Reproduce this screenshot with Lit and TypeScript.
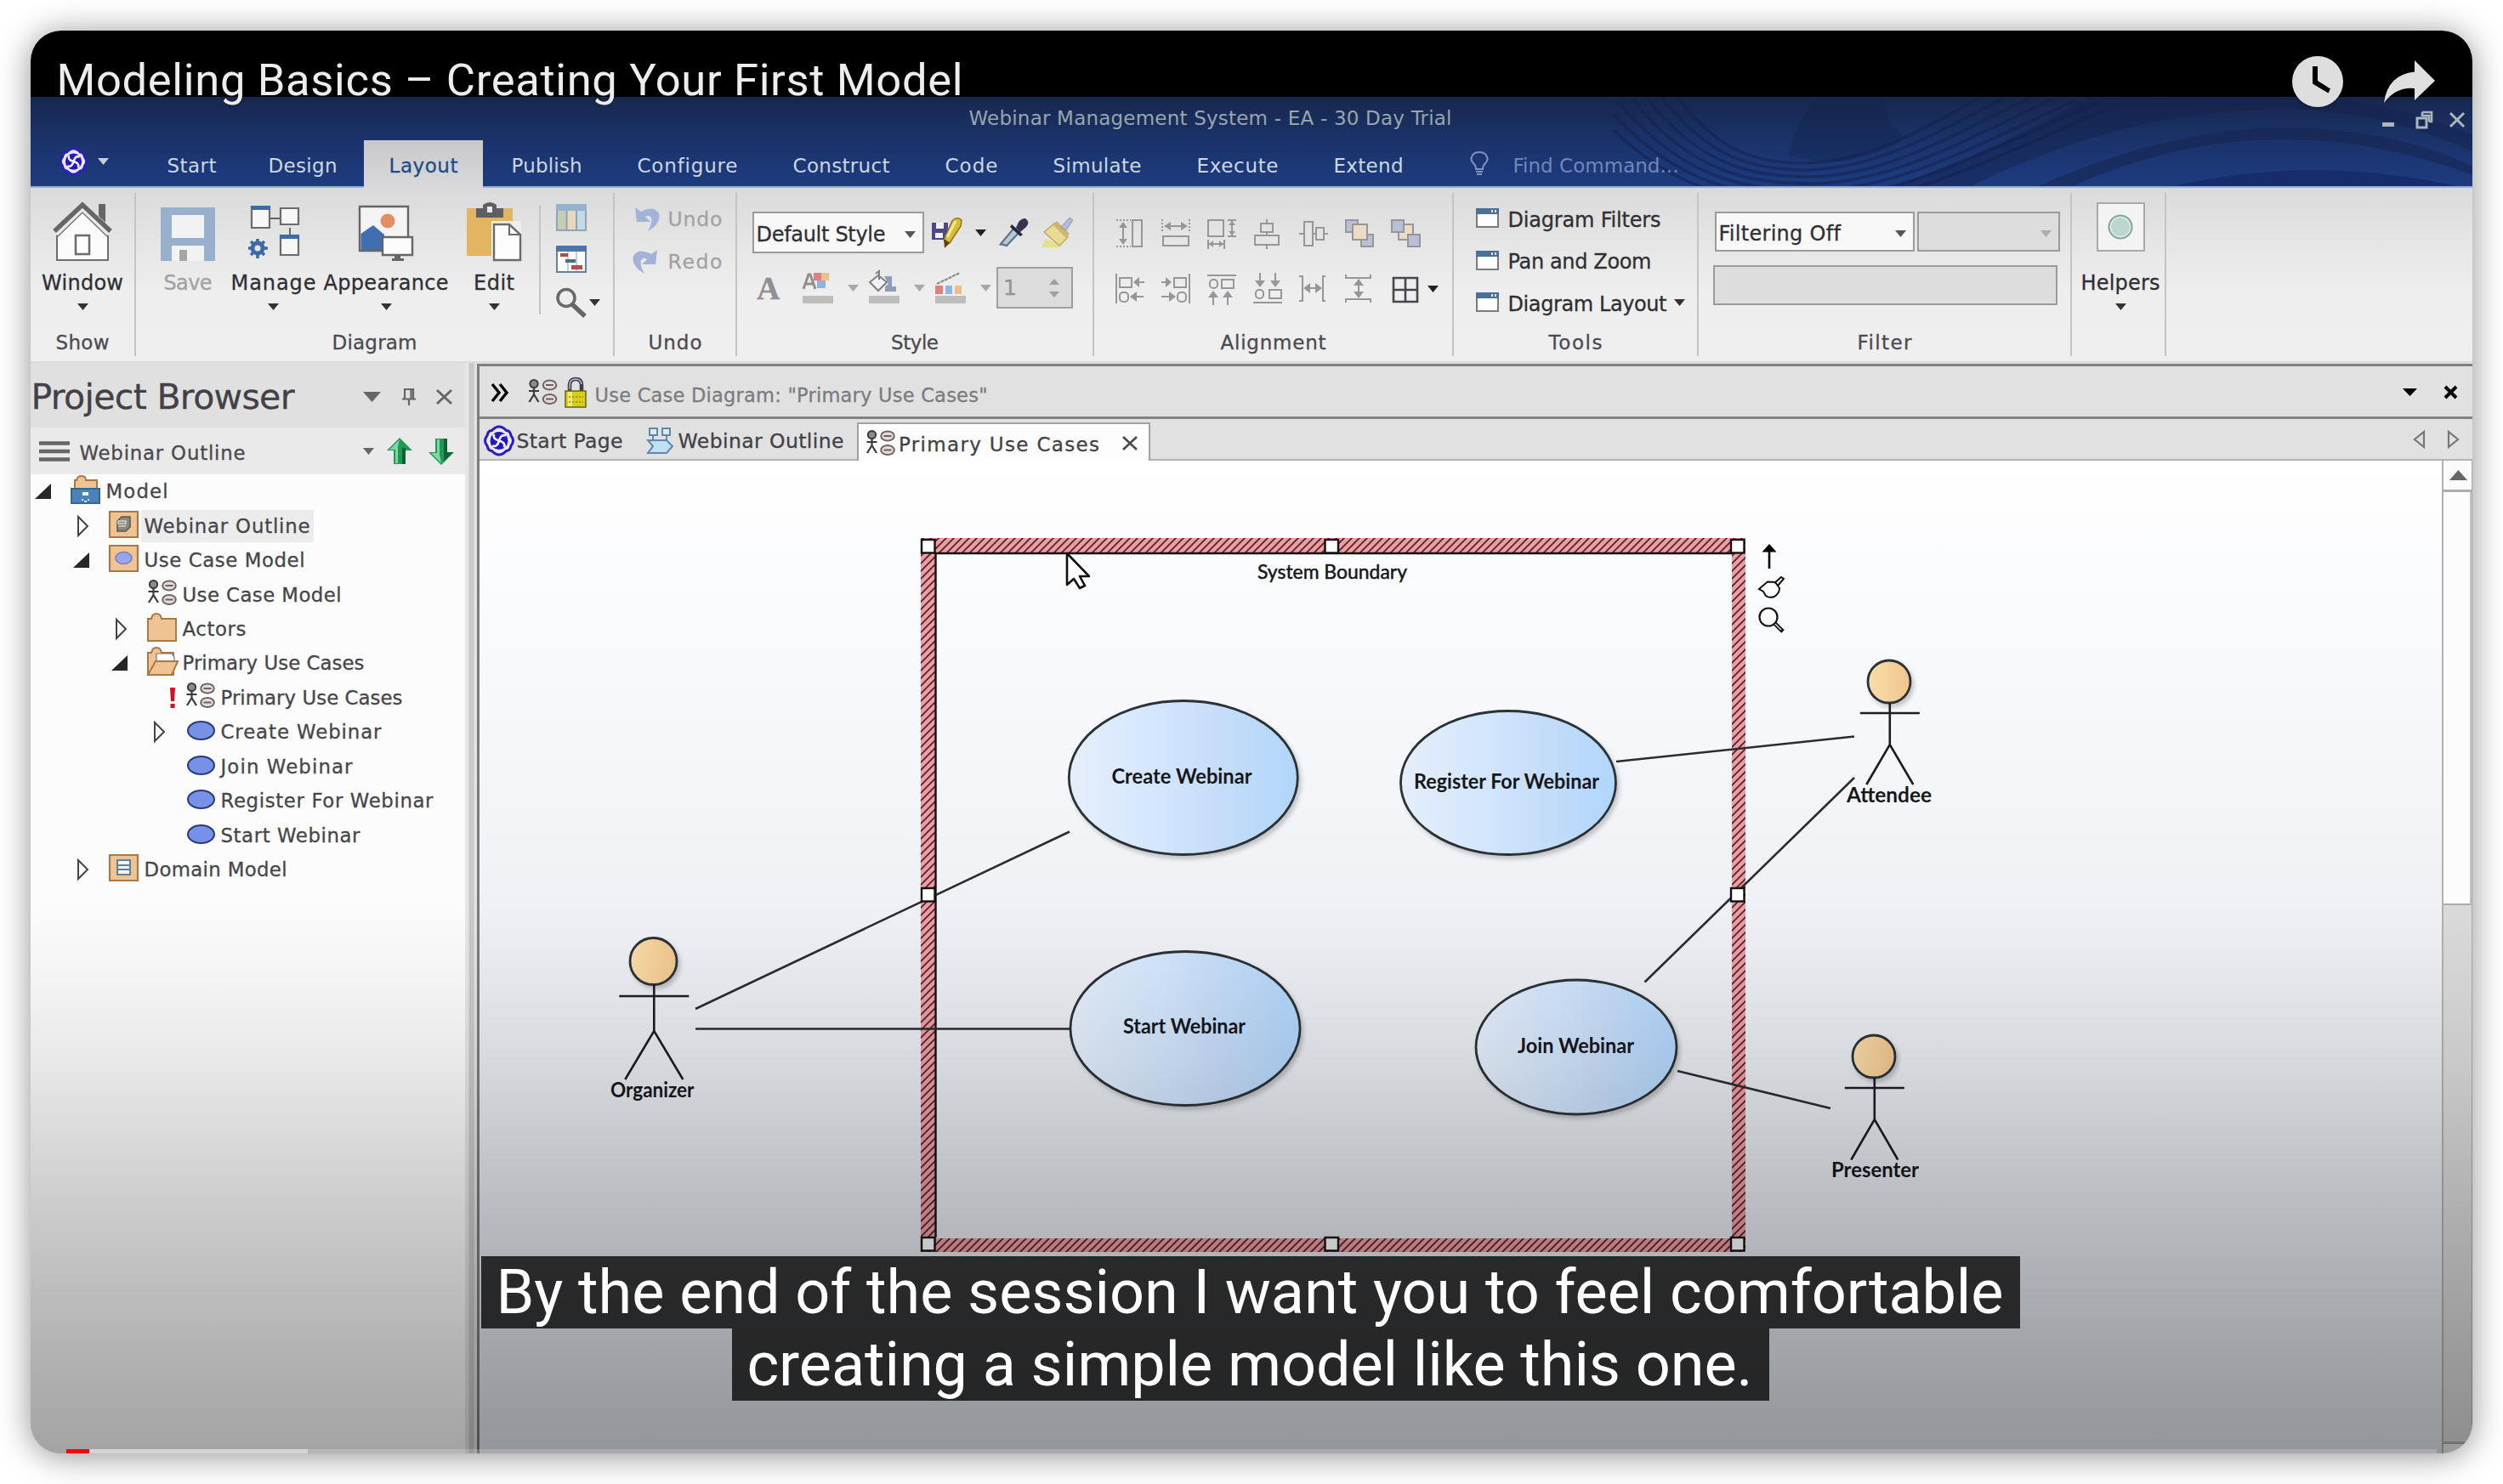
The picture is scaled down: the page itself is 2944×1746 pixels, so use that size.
import { LitElement, html, svg, css, TemplateResult } from "lit";

/** Single line of text whose tracking is adjusted so that it fills a given width. */
class FitText extends LitElement {
  static properties = { w: { type: Number }, label: { type: String } };
  declare w: number;
  declare label: string;
  static styles = css`
    :host { display: inline-block; flex: none; white-space: pre; text-indent: -1.5px; }
  `;
  updated() {
    const span = this.renderRoot.querySelector("span") as HTMLElement;
    span.style.letterSpacing = "0px";
    const natural = span.getBoundingClientRect().width;
    const gaps = Math.max(1, this.label.length - 1);
    span.style.letterSpacing = `${(this.w + 3 - natural) / gaps}px`;
    this.style.width = `${this.w}px`;
  }
  render() {
    return html`<span>${this.label}</span>`;
  }
}
customElements.define("fit-text", FitText);

const t = (label: string, w: number, cls = "") => html`<fit-text class=${cls} label=${label} w=${w}></fit-text>`;

const icon = (w: number, h: number, body: unknown, cls = "") =>
  html`<svg class="ic ${cls}" width=${w} height=${h} viewBox="0 0 ${w} ${h}" fill="none">${body}</svg>`;

const caret = (color = "#333", cls = "") => icon(13, 8, svg`<path d="M0 0H13L6.5 8Z" fill=${color}/>`, cls);

const logo = (w: number, h: number) => html`<svg class="ic" width=${w} height=${h} viewBox="0 0 36 36" fill="none">
  <path d="M9.500 6Q18 -3 26.500 6Q31 6 32 12Q37 18 32 24Q31 30 26.500 30Q18 39 9.500 30Q5 30 4 24Q-1 18 4 12Q5 6 9.500 6Z" fill="#ebe9ff" stroke="#2a1fbe" stroke-width="3"/>
  <circle cx="18" cy="18" r="10.500" fill="#2418c0"/>
  <path d="M18 18Q20 10 26 12M18 18Q16 26 10 24M18 18Q10 16 12 10M18 18Q26 20 24 26" stroke="#f4f2ff" stroke-width="2.800"/>
</svg>`;

const useCaseIcon = (w = 34, h = 31) => html`<svg class="ic" width=${w} height=${h} viewBox="0 0 34 31" fill="none">
  <circle cx="7" cy="5.500" r="4.600" fill="#8c8c8c" stroke="#3a3a3a" stroke-width="2"/>
  <path d="M7 10V19M1 14H13M7 18L1.500 27M7 18L12.500 27" stroke="#3a3a3a" stroke-width="2.200"/>
  <ellipse cx="25.500" cy="7" rx="7.800" ry="5.600" fill="#e6dada" stroke="#6b6262" stroke-width="2"/>
  <ellipse cx="25.500" cy="23.500" rx="7.800" ry="5.600" fill="#e6dada" stroke="#6b6262" stroke-width="2"/>
  <path d="M21 7H30M21 23.500H30" stroke="#6b6262" stroke-width="1.800"/>
</svg>`;

const house = icon(70, 70, svg`
  <path d="M54 2H62V30L54 22Z" fill="#666"/>
  <path d="M5 33L35 8L65 33V68H5Z" fill="#fbfbfb" stroke="#6e6e6e" stroke-width="2"/>
  <path d="M2 36L35 4L68 36" stroke="#e8e8e8" stroke-width="9"/>
  <path d="M2 34L35 3L68 34" stroke="#666" stroke-width="5.500"/>
  <path d="M5 41L35 12L65 41" stroke="#777" stroke-width="1.500"/>
  <rect x="27" y="39" width="16" height="22" stroke="#6e6e6e" stroke-width="2.600" fill="#fff"/>`);

const save = icon(64, 70, svg`
  <path d="M0 6H64V69H0Z" fill="#98b0cd"/><path d="M13 15H51V42H13Z" fill="#f2f2f3"/><path d="M13 51H51V69H13Z" fill="#f2f2f3"/>
  <rect x="22" y="56" width="9" height="13" fill="#a0a8a8"/>`);

const manage = icon(62, 70, svg`
  <path d="M26 19H38M50 30V42" stroke="#666" stroke-width="2"/>
  <g fill="#f7f7f7" stroke="#6b6b6b" stroke-width="2.200"><path d="M5 5H26V30H5Z"/><path d="M39 7H60V26H39Z"/><path d="M39 39H60V62H39Z"/></g>
  <path d="M4 4H27V9H4ZM38 38H61V43H38Z" fill="#3f6ba5"/>
  <circle cx="12" cy="54" r="6" stroke="#3f6ba5" stroke-width="5"/>
  <path d="M12 43V48M12 60V66M1 54H6M18 54H24M4 46L8 50M16 58L20 62M4 62L8 58M16 50L20 46" stroke="#3f6ba5" stroke-width="3.600"/>`);

const appearance = icon(64, 70, svg`
  <path d="M1 5H58V57H1Z" fill="#f4f4f4" stroke="#666" stroke-width="2.400"/>
  <circle cx="34" cy="22" r="8.500" fill="#e58d63"/>
  <path d="M2.500 56V37L17 27L30 38V56Z" fill="#3f6fae"/>
  <path d="M28 41H63V62H28Z" fill="#fcfcfc" stroke="#666" stroke-width="2.400"/>
  <path d="M42 62H49V66H53V69H39V66H42Z" fill="#666"/>`);

const edit = icon(64, 70, svg`
  <path d="M0 7H54V63H0Z" rx="2" fill="#e2b661"/>
  <path d="M29 22H64V70H29Z" fill="#eee"/>
  <path d="M11 7H19V3Q27 -3 35 3V7H43V18H11Z" fill="#5f5f63"/><rect x="24" y="5" width="6" height="7" fill="#e9e9e9"/>
  <path d="M32 26H50L63 38V68H32Z" fill="#fdfdfd" stroke="#6b6b6b" stroke-width="2.400"/><path d="M50 26V38H63" stroke="#6b6b6b" stroke-width="2.200"/>`);

const columnsIcon = icon(36, 32, svg`
  <path d="M1 1H35V31H1Z" fill="#c5cdb7" stroke="#90a4b4" stroke-width="2"/><path d="M13 7H24V30H13Z" fill="#ead8bd"/><path d="M24 7H34V30H24Z" fill="#c3dbe2"/>
  <path d="M0 0H36V8H0Z" fill="#97b0cc"/><path d="M12.500 8V31M24 8V31" stroke="#90a4b4" stroke-width="2"/>`);
const gantt = icon(36, 32, svg`
  <path d="M1 1H35V31H1Z" fill="#fafafa" stroke="#6680a0" stroke-width="2"/><path d="M0 0H36V7H0Z" fill="#4c76a8"/>
  <path d="M14 7V30M24 7V30" stroke="#a7c3d2" stroke-width="1.500"/>
  <path d="M5 9H14V13H5Z" fill="#ac4b46"/><path d="M11 16H23V20H11Z" fill="#4b7281"/><path d="M18 23H31V28H18Z" fill="#b25049"/>`);
const magnifier = icon(36, 36, svg`
  <circle cx="12" cy="12.500" r="10" stroke="#6a6a6a" stroke-width="3.600" fill="#eee"/><path d="M19 20L34 34" stroke="#666" stroke-width="5.500"/>`);

const undoI = icon(32, 30, svg`<path d="M3 1L5 18H21L15 12Q19 9 22 13Q24 18 18 29Q34 20 31 8Q25 -2 10 6Z" fill="#a3b3d8"/>`);
const redoI = icon(32, 30, svg`<path d="M29 1L27 18H11L17 12Q13 9 10 13Q8 18 14 29Q-2 20 1 8Q7 -2 22 6Z" fill="#a3b3d8"/>`);

const savePencil = icon(36, 38, svg`
  <path d="M0 7H19V27H0Z" fill="#4d4787"/><path d="M5 7H14V14H5ZM4 19H13V25H4Z" fill="#f3f0fb"/>
  <path d="M14 27L24 5Q29 -1 35 4L34 11L21 31Z" fill="#d8bd3a" stroke="#8f7418" stroke-width="1.500"/><path d="M18 24L28 5" stroke="#f3e894" stroke-width="3"/>
  <path d="M14 26L21 31L15 37Z" fill="#6b3a12"/>`);
const dropper = icon(37, 36, svg`
  <path d="M1 33H13L8 28Z" fill="#8ea7b5"/><path d="M4 31L20 12L26 17L11 33Z" fill="#b6c9da" stroke="#5a7286" stroke-width="2"/>
  <path d="M17 8L30 20L27 22L15 11Z" fill="#22253c"/><path d="M22 12Q26 0 33 1Q39 5 34 11L27 17Z" fill="#34364f"/>`, "s5");
const brush = icon(36, 38, svg`
  <path d="M0 34L3 26L14 30L22 36H0Z" fill="#e4e08e"/>
  <path d="M2 18L14 8L30 24L20 34Z" fill="#eadb93" stroke="#bfa863" stroke-width="1.500"/>
  <path d="M12 9L17 5L32 20L28 25Z" fill="#cdb473"/><path d="M22 12L32 1L36 4L28 16Z" fill="#b4bbd6" stroke="#8e97b4"/>`);
const bigA = html`<span class="bigA">A</span>`;
const colorA = icon(36, 38, svg`
  <path d="M1 20L7 3H9L15 20M4 14H12" stroke="#8f8f8f" stroke-width="3"/><path d="M13 1H22V10H13Z" fill="#dd7f86"/><path d="M22 1H31V10H22Z" fill="#ecc181"/><path d="M17 10H27V19H17Z" fill="#8db4e6"/>
  <path d="M0 28H36V37H0Z" fill="#bdbdbd"/>`);
const bucket = icon(36, 38, svg`
  <path d="M11 4L21 12L11 22L1 12Z" stroke="#7e7e86" stroke-width="2" fill="#f3f3f3"/><path d="M8 2L12 -1V9" stroke="#7e7e86" stroke-width="2"/>
  <path d="M18 5H27V17H32V23H19V17L23 14Z" fill="#8f9cba"/><path d="M0 28H36V37H0Z" fill="#bdbdbd"/>`);
const lineColor = icon(36, 38, svg`
  <path d="M2 14L29 1" stroke="#8a8a8a" stroke-width="2.200" stroke-dasharray="4 1"/><path d="M0 16H9V26H0Z" fill="#dd8187"/><path d="M12 16H20V26H12Z" fill="#8eb6e4"/><path d="M23 16H31V26H23Z" fill="#ecc08a"/>
  <path d="M0 28H36V37H0Z" fill="#bdbdbd"/>`);

const g = "#97979b";
const al = (b: unknown) => html`<svg class="ic" width="34" height="38" viewBox="0 0 34 38" fill="none" stroke=${g} stroke-width="2">${b}</svg>`;
const fillG = (d: string) => svg`<path d=${d} fill=${g} stroke="none"/>`;
const alignRow1 = [
  al(svg`<path d="M1 3H18M1 34H18" stroke-dasharray="2 2"/><path d="M9 6V31"/>${fillG("M9 5L14 12H4ZM9 32L4 25H14Z")}<path d="M20 3H31V34H20Z"/>`),
  al(svg`<path d="M1 2V18M33 2V18" stroke-dasharray="2 2"/><path d="M5 10H29"/>${fillG("M3 10L11 5V15ZM31 10L23 5V15Z")}<path d="M2 22H32V33H2Z"/>`),
  al(svg`<path d="M1 3H19V22H1Z"/><path d="M24 3H34M24 22H34M29 3V22M1 26V37M20 26V37M1 31H20"/>${fillG("M29 4L33 9H25ZM29 21L25 16H33ZM2 31L7 27V35ZM19 31L14 27V35Z")}`),
  al(svg`<path d="M16 2V7M16 17V21M16 32V37"/><path d="M9 7H23V17H9Z"/><path d="M2 21H30V32H2Z"/>`),
  al(svg`<path d="M0 19H6M16 19H20M29 19H34"/><path d="M6 5H16V33H6Z"/><path d="M20 12H29V26H20Z"/>`),
  al(svg`<path d="M1 3H15V17H1Z" fill="#b9bfd4"/><path d="M19 20H33V34H19Z" fill="#b9bfd4"/><path d="M9 8H26V26H9Z" fill="#ecdcc4"/>`),
  al(svg`<path d="M9 8H26V26H9Z" fill="#ecdcc4"/><path d="M1 3H15V17H1Z" fill="#b9bfd4"/><path d="M20 20H34V34H20Z" fill="#b9bfd4"/>`),
];
const alignRow2 = [
  al(svg`<path d="M1 1V36"/><path d="M5 6H19V17H5Z"/><rect x="5" y="23" width="10" height="11" rx="4"/><path d="M23 11H34M19 28H33"/>${fillG("M21 11L28 5V17ZM17 28L25 22V34Z")}`),
  al(svg`<path d="M33 1V36"/><path d="M15 6H29V17H15Z"/><rect x="19" y="23" width="10" height="11" rx="4"/><path d="M0 11H9M0 28H14"/>${fillG("M12 11L5 5V17ZM17 28L9 22V34Z")}`),
  al(svg`<path d="M0 3H34"/><path d="M17 8H31V18H17Z"/><rect x="3" y="8" width="9" height="10" rx="4"/><path d="M7 25V38M24 25V38"/>${fillG("M7 21L13 29H1ZM24 21L30 29H18Z")}`),
  al(svg`<path d="M0 35H34"/><path d="M19 20H33V30H19Z"/><rect x="3" y="20" width="9" height="10" rx="4"/><path d="M8 0V13M26 0V13"/>${fillG("M8 17L14 9H2ZM26 17L32 9H20Z")}`),
  al(svg`<path d="M0 4H4V33H0M31 4H28V33H31M7 18H26"/>${fillG("M5 18L13 12V24ZM27 18L19 12V24Z")}`),
  al(svg`<path d="M1 2V6H30V2M1 35V31H30V35M16 8V29"/>${fillG("M16 7L22 15H10ZM16 30L10 22H22Z")}`),
  html`<svg class="ic" width="34" height="38" viewBox="0 0 34 38" fill="none" stroke="#46464e" stroke-width="2.600"><path d="M3 6H31V34H3ZM17 6V34M3 20H31"/></svg>`,
];
const winIcon = icon(27, 23, svg`<path d="M1 1H26V22H1Z" fill="#fdfdfd" stroke="#7b7b7b" stroke-width="2"/><path d="M0 0H27V7H0Z" fill="#4a6f99"/><path d="M18 2H20V5H18ZM22 2H24V5H22Z" fill="#dfe8f2"/>`, "win");

/* Project tree ------------------------------------------------------- */
const opened = icon(32, 24, svg`<path d="M20 3V21H1Z" fill="#262626"/>`);
const closed = icon(32, 26, svg`<path d="M7 2L18 13L7 24Z" fill="#fff" stroke="#444" stroke-width="2"/>`);
const none = icon(32, 24, "");
const bang = icon(32, 26, svg`<path d="M25 1H31L30 17H26ZM25.500 20H30.500V25H25.500Z" fill="#cc1320"/>`);

const pkg = (inner: unknown) => icon(35, 32, svg`<path d="M1 1H34V31H1Z" fill="#f0c393" stroke="#a9794a" stroke-width="2.200"/>${inner}`);
const modelI = icon(35, 34, svg`
  <path d="M5 16V6H7Q8 1 13 1Q18 1 18 6H31V16Z" fill="#f0c393" stroke="#a9794a" stroke-width="2"/><path d="M1 16H34V33H1Z" fill="#4a83b8" stroke="#38648f" stroke-width="2"/>
  <path d="M14 20H21V24H14Z" fill="#eef4fa"/><path d="M13 28H15V30H13ZM20 28H22V30H20ZM16 30H19V32H16Z" fill="#d5e4f1"/>`);
const webI = pkg(svg`<path d="M10 12L15 7H25V19L20 24H10Z" fill="#8a8a7c" stroke="#5a5a50" stroke-width="1.500"/><path d="M11 12H20V15H11ZM11 18H20" stroke="#d6d6c8" stroke-width="1.500"/>`);
const ucI = pkg(svg`<ellipse cx="17.500" cy="15.500" rx="9.500" ry="7" fill="#99a5ea" stroke="#7a82bd" stroke-width="1.500"/>`);
const domI = pkg(svg`<path d="M10 7H25V24H10Z" fill="#eef6fa" stroke="#5f8294" stroke-width="2"/><path d="M10 13H25M10 18H25" stroke="#5f8294" stroke-width="2"/>`);
const folderI = icon(35, 34, svg`<path d="M1 7H5Q6 1 11 1Q16 1 17 7H34V33H1Z" fill="#f0c393" stroke="#a9794a" stroke-width="2"/>`);
const openI = icon(36, 34, svg`<path d="M1 7H5Q6 1 11 1Q16 1 17 7H31V33H1Z" fill="#f0c393" stroke="#a9794a" stroke-width="2"/><path d="M11 8H29L32 12V20H11Z" fill="#fff" stroke="#777" stroke-width="1.200"/><path d="M10 17H36L29 33H1Z" fill="#f0c393" stroke="#a9794a" stroke-width="2"/>`);
const oval = icon(35, 28, svg`<ellipse cx="18.500" cy="14.500" rx="15.500" ry="10.500" fill="#7592e6" stroke="#2c3a78" stroke-width="2"/>`);

type Node = [number, TemplateResult, TemplateResult, string, number, boolean?];
const tree: Node[] = [
  [0, opened, modelI, "Model", 70],
  [1, closed, webI, "Webinar Outline", 192, true],
  [1, opened, ucI, "Use Case Model", 186],
  [2, none, useCaseIcon(35, 31), "Use Case Model", 184],
  [2, closed, folderI, "Actors", 72],
  [2, opened, openI, "Primary Use Cases", 211],
  [3, bang, useCaseIcon(35, 31), "Primary Use Cases", 211],
  [3, closed, oval, "Create Webinar", 186],
  [3, none, oval, "Join Webinar", 152],
  [3, none, oval, "Register For Webinar", 247],
  [3, none, oval, "Start Webinar", 161],
  [1, closed, domI, "Domain Model", 165],
];

const tabs: [string, number][] = [
  ["Start", 55], ["Design", 78], ["Layout", 78], ["Publish", 80], ["Configure", 115],
  ["Construct", 111], ["Code", 59], ["Simulate", 101], ["Execute", 93], ["Extend", 79],
];

/* Diagram ------------------------------------------------------------ */
const handles = [
  [1083, 634], [1557.5, 634], [2035, 634], [1083, 1044], [2035, 1044], [1083, 1455], [1557.5, 1455], [2035, 1455],
];
const cases: [number, number, number, number, string, number, number, number][] = [
  [1391.8, 915, 134.5, 90.5, "Create Webinar", 1307.5, 921.5, 165],
  [1774, 921, 126.5, 84.5, "Register For Webinar", 1663, 928, 218],
  [1394, 1210, 135, 90.5, "Start Webinar", 1321, 1216, 144],
  [1854, 1232, 118, 79, "Join Webinar", 1785, 1238.5, 137],
];
const actors: [number, number, number, number, number, number, string, number, number, number][] = [
  // cx, cy, r, armY, hipY, footY, name, text x, baseline, text width
  [2222, 802, 25, 839, 876, 923, "Attendee", 2172, 944, 100],
  [768.5, 1131, 27.5, 1172, 1213, 1270, "Organizer", 718, 1290.5, 98.5],
  [2204, 1243, 25, 1280, 1317, 1364.5, "Presenter", 2154, 1385, 103],
];
const links = [
  [818, 1187, 1258, 978.5], [818, 1210.5, 1258, 1210.5], [1901, 896, 2181, 866.5], [2181, 915, 1934.5, 1155.5], [1973, 1260, 2153, 1304],
];

const diagram = html`<svg class="canvas" width="2308" height="1169" viewBox="564 541 2308 1169" fill="none">
  <defs>
    <pattern id="hatch" width="9" height="9" patternUnits="userSpaceOnUse">
      <path d="M0 0H9V9H0Z" fill="#ee9ba2"/>
      <path d="M-2 11L11 -2M-2 2L2 -2M7 11L11 7" stroke="#4a2428" stroke-width="1.700"/>
    </pattern>
    <linearGradient id="uc"><stop offset="0" stop-color="#e6eefb"/><stop offset=".4" stop-color="#d2e6fd"/><stop offset=".6" stop-color="#c9def9"/><stop offset="1" stop-color="#b0d6fb"/></linearGradient>
    <linearGradient id="head"><stop offset="0" stop-color="#f9dda9"/><stop offset="1" stop-color="#f0c58d"/></linearGradient>
    <filter id="sh" x="-10%" y="-10%" width="125%" height="125%"><feDropShadow dx="3" dy="4" stdDeviation="2.500" flood-color="#000" flood-opacity=".2"/></filter>
  </defs>
  <path d="M1083 633H2053V650H1083ZM1083 650H1100V1473H1083ZM2037 650H2053V1473H2037ZM1100 1457H2037V1473H1100Z" fill="url(#hatch)"/>
  <path d="M1100.500 1456V651H2037" stroke="#111" stroke-width="2.400"/>
  <g stroke="#2a2c30" stroke-width="2.600">${links.map((l) => svg`<line x1=${l[0]} y1=${l[1]} x2=${l[2]} y2=${l[3]}/>`)}</g>
  ${handles.map((h) => svg`<rect x=${h[0] + 1} y=${h[1] + 1} width="15.500" height="15.500" fill="#fff" stroke="#111" stroke-width="2.400"/>`)}
  <text class="sysb" x="1479" y="680.500" textLength="176" lengthAdjust="spacingAndGlyphs">System Boundary</text>
  ${cases.map((c) => svg`
    <ellipse cx=${c[0]} cy=${c[1]} rx=${c[2]} ry=${c[3]} fill="url(#uc)" stroke="#2c3036" stroke-width="2.800" filter="url(#sh)"/>
    <text class="dt" x=${c[5]} y=${c[6]} textLength=${c[7]} lengthAdjust="spacingAndGlyphs">${c[4]}</text>`)}
  ${actors.map((a) => {
    const half = a[6] === "Organizer" ? 41 : 35;
    const foot = a[6] === "Organizer" ? 34 : 27.5;
    const x = a[0] + 0.8;
    return svg`
    <circle cx=${a[0]} cy=${a[1]} r=${a[2]} fill="url(#head)" stroke="#2c3036" stroke-width="2.800" filter="url(#sh)"/>
    <path d="M${x} ${a[1] + a[2]}V${a[4]}M${x - half} ${a[3]}H${x + half}M${x - foot} ${a[5]}L${x} ${a[4]}L${x + foot} ${a[5]}" stroke="#1b1d20" stroke-width="2.600"/>
    <text class="dt" x=${a[7]} y=${a[8]} textLength=${a[9]} lengthAdjust="spacingAndGlyphs">${a[6]}</text>`;
  })}
  <path d="M2081 669V646" stroke="#000" stroke-width="2.600"/><path d="M2081 640L2089.500 649.500H2072.500Z" fill="#000"/>
  <path d="M2069 693L2079 684.500L2088 685L2093 692Q2093 698 2087 702Q2081 704 2077 701L2074 696ZM2087 686L2095 679L2098 681L2091 689" stroke="#111" stroke-width="2" fill="#fff"/>
  <circle cx="2080" cy="726" r="10.500" stroke="#111" stroke-width="2.200" fill="#fff"/><path d="M2087 733L2097 743" stroke="#111" stroke-width="5"/><path d="M2088 734L2095 741" stroke="#ddd" stroke-width="1.500"/>
  <path d="M1255 651V688L1263 681L1270 692L1276 689L1270 678H1281Z" fill="#fff" stroke="#111" stroke-width="2.600" stroke-linejoin="round"/>
</svg>`;

const waves = html`<svg class="waves" width="1010" height="105" viewBox="0 0 1010 105" fill="none">
  <path d="M205 72Q212 40 225 20L240 0H318Q322 20 325 34Q340 42 342 50Q300 74 262 76Q230 76 205 68Z" fill="#122149" opacity=".35"/>
  <path d="M420 105Q600 16 780 14Q900 14 1010 64V44Q900 0 790 -2H560Q480 50 330 105Z" fill="#13214b" opacity=".45"/>
  <path d="M540 105Q660 50 790 50Q900 50 1010 92V82Q920 38 790 36Q650 38 500 105Z" fill="#13214b" opacity=".5"/>
  <path d="M660 105Q740 86 830 86Q920 88 990 105Z" fill="#14255f" opacity=".6"/>
  <g stroke="#12204a" stroke-width="3.500" opacity=".5">
    ${[0, 1, 2, 3, 4, 5, 6].map((i) => svg`<path d=${`M${72 - i * 17} ${-4 + i * 2}C${122 - i * 10} ${66 + i * 8} ${170 - i * 4} ${78 + i * 8} ${224 + i * 4} ${78 + i * 8}C${310 + i * 8} ${76 + i * 8} ${380 + i * 18} ${28 + i * 4} ${440 + i * 26} ${-4 + i * 2}`}/>`)}
  </g>
</svg>`;

class AppRoot extends LitElement {
  static styles = css`
    :host { display: block; width: 2944px; height: 1746px; background: #fff; overflow: hidden; font-family: "DejaVu Sans", sans-serif; font-size: 23px; line-height: 24px; color: #3c3c40; }
    * { box-sizing: border-box; }
    .ic { display: block; flex: none; overflow: visible; }
    .page { padding: 36px; width: 2944px; height: 1746px; }
    .card { position: relative; width: 2872px; height: 1674px; border-radius: 36px; box-shadow: 0 3px 38px rgba(0,0,0,.44); }
    .video { width: 100%; height: 100%; border-radius: 36px; overflow: hidden; background: #000; padding-top: 78px; display: flex; flex-direction: column; -webkit-text-stroke: .3px currentColor; }
    .shade { position: absolute; inset: 0; border-radius: 36px; pointer-events: none;
      background: linear-gradient(to bottom, transparent 1024px, rgba(0,0,0,.03) 1114px, rgba(0,0,0,.08) 1214px, rgba(0,0,0,.145) 1314px, rgba(0,0,0,.205) 1404px, rgba(0,0,0,.275) 1524px, rgba(0,0,0,.352) 1674px); }

    .header { position: relative; flex: none; height: 107px; background: linear-gradient(#17274d, #1b336b 50%, #1d3a7d 92%); border-bottom: 2px solid #93aedb; }
    .waves { position: absolute; right: 0; top: 0; }
    .titlebar { position: relative; height: 51px; display: flex; align-items: center; justify-content: space-between; padding: 0 8px 0 1105px; color: #98a5ab; -webkit-text-stroke: 0; }
    .titlebar fit-text { margin-top: -1px; }
    .titlebar svg { margin-top: 2px; }
    .tabs { position: relative; height: 56px; display: flex; color: #c9d8e4; -webkit-text-stroke: 0; }
    .app { display: flex; align-items: center; gap: 12px; padding: 0 38px 0 34px; height: 49px; }
    .tab { height: 56px; padding: 18px 34px 0; }
    .tab.n { padding: 18px 32px 0; }
    .tab.on { background: linear-gradient(#c8c8cc, #d9d9db); color: #1e4c86; margin: 0 1px; padding: 18px 31px 0; -webkit-text-stroke: .3px #1e4c86; }
    .find { display: flex; align-items: flex-start; gap: 30px; padding: 13px 0 0 46px; color: #7088ba; }
    .find fit-text { margin-top: 5px; }

    .ribbon { flex: none; height: 206px; display: flex; align-items: flex-start; padding-top: 6px; background: linear-gradient(#dadadb, #e5e5e6 30%, #eeeeee 60%, #efefef); border-bottom: 2px solid #dcdcdc; }
    .group { height: 192px; border-right: 2px solid #c4c4c6; display: flex; flex-direction: column; align-items: center; flex: none; color: #4a4a50; }
    .body { height: 164px; width: 100%; }
    .flex { display: flex; }
    .g1 { width: 124px; } .g2 { width: 563px; } .g3 { width: 144px; } .g4 { width: 420px; } .g5 { width: 423px; } .g6 { width: 288px; } .g7 { width: 439px; } .g8 { width: 111px; }
    .btn { display: flex; flex-direction: column; align-items: center; padding-top: 11px; font-size: 24px; line-height: 26px; color: #2f2f33; }
    .btn fit-text { margin: 12px 0 11px; }
    .dis, .btn.dis { color: #a2a2a4; }
    .diag { padding-left: 29px; }
    .diag .m { margin-left: 20px; } .diag .a { margin-left: 12px; } .diag .e { margin-left: 23px; }
    .rule { width: 2px; height: 128px; background: #c4c4c6; margin: 15px 18px 0 21px; }
    .smalls { display: flex; flex-direction: column; gap: 17px; padding-top: 13px; }
    .mag { display: flex; align-items: center; gap: 3px; }
    .undo { padding: 6px 0 0 21px; font-size: 23.500px; }
    .urow { display: flex; align-items: center; gap: 11px; height: 50px; }
    .style { padding: 22px 0 0 18px; display: flex; flex-direction: column; gap: 16px; }
    .row { display: flex; align-items: center; height: 49px; flex: none; }
    .sel { display: flex; align-items: center; justify-content: space-between; height: 49px; border: 2px solid #9b9b9d; background: #f8f8f8; padding: 4px 8px 0 4px; color: #303034; font-size: 24px; }
    .sel.s1 { width: 202px; margin-right: 9px; } .sel.f1 { width: 235px; height: 47px; margin-right: 3px; } 
    .sel.off { background: #dddddd; height: 47px; justify-content: flex-end; }
    .sel.f2 { width: 168px; } .sel.f3 { width: 405px; margin-left: -2px; }
    .bigA { font: bold 38px/36px "Liberation Serif", serif; color: #8f8f93; width: 29px; }
    .s4 { margin: 0 13px 0 15px; } .s5 { margin-right: 16px; } .r0 { padding-left: 5px; } .r1 { margin: 0 0 0 25px; } .r2 { margin: 0 12px 0 17px; } .r3 { margin-right: 6px; margin-left: 17px; }
    .spin { width: 90px; height: 49px; border: 2px solid #9f9fa1; background: #dcdcdd; display: flex; justify-content: space-between; align-items: center; padding: 0 14px 0 6px; color: #949496; font-size: 25px; }
    .align { padding: 29px 0 0 25px; display: flex; flex-direction: column; gap: 27px; }
    .arow { display: flex; gap: 20px; align-items: center; height: 38px; }
    .arow .after { margin-left: -11px; }
    .tools { padding: 7px 0 0 26px; color: #2f2f33; font-size: 24px; }
    .trow { display: flex; align-items: center; gap: 12px; height: 49.500px; }
    .trow .td { margin: -3px 0 0 -2px; }
    .win { margin-top: -4px; }
    .filter { padding: 22px 0 0 19px; display: flex; flex-direction: column; gap: 16px; }
    .filter .row { height: 47px; }
    .hbox { width: 57px; height: 58px; border: 2px solid #a9a9a9; background: #f3f3f3; display: grid; place-items: center; margin-bottom: 12px; }
    .g8 .body { padding-left: 5px; }

    .work { flex: 1; display: flex; min-height: 0; background: #e0e0e0; }
    .side { width: 511px; background: #fcfcfc; flex: none; }
    .sh { height: 76px; background: #e0e0e1; display: flex; align-items: center; padding: 3px 0 0 2px; font-size: 41px; line-height: 48px; color: #414146; }
    .sh .i1 { margin-left: 82px; } .sh .i2 { margin-left: 25px; } .sh .i3 { margin-left: 24px; }
    .sb { height: 55px; background: #eaeaea; display: flex; align-items: center; padding-left: 10px; color: #4a4a4e; font-size: 22.800px; }
    .sb fit-text { margin: 4px 140px 0 13px; }
    .sb .up { margin: 0 19px 0 15px; }
    .node { display: flex; align-items: center; height: 40.450px; color: #46464a; font-size: 22.800px; }
    .l0 { padding-left: 4px; } .l1 { padding-left: 49px; } .l2 { padding-left: 94px; } .l3 { padding-left: 139px; }
    .node .pic { width: 36px; margin: -4px 2px 0 11px; }
    .node .txt { padding: 6px 6px 6px 5px; line-height: 26px; }
    .node .txt.sel2 { background: #ececed; }
    .gutter { width: 14px; flex: none; background: linear-gradient(to right, #e6e6e6 4px, #cacaca 5px, #c8c8c8 10px, #e2e2e2 11px); }
    .main { flex: 1; border-left: 3px solid #7c7c7e; border-top: 3px solid #808080; min-width: 0; display: flex; flex-direction: column; background: #e1e1e1; margin-top: 1px; }
    .cap { height: 62px; flex: none; border-bottom: 3px solid #828284; display: flex; align-items: center; padding: 2px 17px 0 14px; color: #7b7b7f; font-size: 22.500px; }
    .cap .uc { margin: 0 9px 0 22px; } .cap fit-text { margin: 7px auto 0 11px; } .cap .x { margin-left: 31px; }
    .dtabs { height: 49px; flex: none; display: flex; align-items: center; border-bottom: 2px solid #b4b4b6; padding: 4px 16px 0 5px; font-size: 23.500px; color: #414146; }
    .dtabs .t1 { margin: 0 30px 0 4px; } .dtabs .t2 { margin: 0 17px 0 7px; } 
    .active { height: 45px; margin-bottom: -2px; width: 345px; border: 2px solid #a2a2a4; border-bottom: 0; background: #fdfdfd; display: flex; align-items: center; padding: 1px 13px 0 8px; font-size: 23px; justify-content: space-between; margin-right: auto; align-self: flex-end; }
    .active fit-text { margin: 4px 23px 0 0; }
    .nav { display: flex; gap: 27px; margin-top: -3px; }
    .stage { flex: 1; display: flex; min-height: 0; overflow: hidden; -webkit-text-stroke: 0; }
    .canvas { display: block; flex: none; background: linear-gradient(#ffffff, #fafbfd 14%, #f5f7fa 28%, #f0f1f6 45%, #e8ebf0 60%, #e4e8ef 76%, #e2e7ee); margin-top: -1px; }
    .dt { font-family: Lato, sans-serif; font-weight: 700; font-size: 25px; fill: #15171b; }
    .sysb { font-family: Lato, sans-serif; font-weight: 400; font-size: 22.500px; fill: #15171b; stroke: #15171b; stroke-width: .5px; }
    .scroll { width: 36px; background: #dadada; border-left: 2px solid #b0b0b2; border-right: 1px solid #aaa; display: flex; flex-direction: column; justify-content: space-between; }
    .sbtn { height: 37px; border-bottom: 3px solid #aeaeb0; background: #fafafa; display: grid; place-items: center; padding-left: 2px; }
    .thumb { height: 486px; background: #fcfcfc; border-bottom: 2px solid #aeaeb0; border-right: 2px solid #c4c4c6; }
    .sbot { height: 14px; background: #eee; border-top: 3px solid #aeaeb0; }

    .vtitle { position: absolute; left: 32px; top: 26px; font: 400 52.500px/64px Roboto, sans-serif; color: #ededed; text-shadow: 0 0 3px rgba(0,0,0,.5); }
    .vicons { position: absolute; left: 2660px; top: 30px; filter: drop-shadow(0 0 2px rgba(0,0,0,.5)); }
    .subs { position: absolute; left: 530px; top: 1442px; width: 1810px; display: flex; flex-direction: column; align-items: center; font: 400 72px/85px Roboto, sans-serif; color: #fff; }
    .line { background: rgba(8,8,8,.8); padding: 0 21px 0 19px; height: 85px; }
    .bar { position: absolute; left: 42px; right: 42px; bottom: 0; height: 5px; background: rgba(255,255,255,.2); display: flex; }
    .played { width: 27px; background: #f00; } .loaded { width: 257px; background: #d4d4d4; }
  `;

  render() {
    return html`<div class="page"><div class="card">
      <div class="video">
        <div class="header">
          ${waves}
          <div class="titlebar">
            ${t("Webinar Management System - EA - 30 Day Trial", 565)}
            ${icon(100, 24, svg`<path d="M2 15H16V20H2Z" fill="#a9b6bc"/><path d="M49 3H60V14H57M49 3V7H57V14" stroke="#a9b6bc" stroke-width="2.600"/><path d="M43 10H54V21H43Z" stroke="#a9b6bc" stroke-width="3"/><path d="M82 4L98 20M98 4L82 20" stroke="#a9b6bc" stroke-width="3"/>`)}
          </div>
          <div class="tabs">
            <div class="app">${logo(33, 34)}${caret("#c4cfdc")}</div>
            ${tabs.map(([n, w], i) => html`<div class="tab ${i < 3 ? "n" : ""} ${n === "Layout" ? "on" : ""}">${t(n, w)}</div>`)}
            <div class="find">
              ${icon(22, 29, svg`<path d="M7 21Q7 17 4 14Q1 11 1.500 8Q3 1 11 1Q19 1 20.500 8Q21 11 18 14Q15 17 15 21Z" stroke="#7d93c2" stroke-width="2"/><path d="M7 24H15M8 27H14" stroke="#7d93c2" stroke-width="2"/>`)}
              ${t("Find Command...", 192)}
            </div>
          </div>
        </div>

        <div class="ribbon">
          <div class="group g1"><div class="body"><div class="btn">${house}${t("Window", 93)}${caret()}</div></div>${t("Show", 60)}</div>
          <div class="group g2">
            <div class="body flex diag">
              <div class="btn dis">${save}${t("Save", 54)}</div>
              <div class="btn m">${manage}${t("Manage", 97)}${caret()}</div>
              <div class="btn a">${appearance}${t("Appearance", 144)}${caret()}</div>
              <div class="btn e">${edit}${t("Edit", 45)}${caret()}</div>
              <div class="rule"></div>
              <div class="smalls">${columnsIcon}${gantt}<div class="mag">${magnifier}${caret()}</div></div>
            </div>${t("Diagram", 97)}
          </div>
          <div class="group g3">
            <div class="body undo dis"><div class="urow">${undoI}${t("Undo", 61)}</div><div class="urow">${redoI}${t("Redo", 61)}</div></div>${t("Undo", 60)}
          </div>
          <div class="group g4">
            <div class="body style">
              <div class="row"><div class="sel s1">${t("Default Style", 149)}${caret("#555")}</div>${savePencil}${caret("#222", "s4")}${dropper}${brush}</div>
              <div class="row r0">${bigA}<span class="r1">${colorA}</span>${caret("#a8a8a8", "r2")}${bucket}${caret("#a8a8a8", "r2")}${lineColor}${caret("#a8a8a8", "r3")}
                <div class="spin"><span>1</span>${icon(12, 22, svg`<path d="M0 7H12L6 0ZM0 15H12L6 22Z" fill="#a0a0a0"/>`)}</div></div>
            </div>${t("Style", 53)}
          </div>
          <div class="group g5">
            <div class="body align">
              <div class="arow">${alignRow1}</div>
              <div class="arow">${alignRow2}${caret("#222", "after")}</div>
            </div>${t("Alignment", 121)}
          </div>
          <div class="group g6">
            <div class="body tools">
              <div class="trow">${winIcon}${t("Diagram Filters", 177)}</div>
              <div class="trow">${winIcon}${t("Pan and Zoom", 166)}</div>
              <div class="trow">${winIcon}${t("Diagram Layout", 184)}${caret("#333", "td")}</div>
            </div>${t("Tools", 60)}
          </div>
          <div class="group g7">
            <div class="body filter">
              <div class="row"><div class="sel f1">${t("Filtering Off", 140)}${caret("#555")}</div><div class="sel off f2">${caret("#adadad")}</div></div>
              <div class="row"><div class="sel off f3"></div></div>
            </div>${t("Filter", 61)}
          </div>
          <div class="group g8"><div class="body"><div class="btn"><div class="hbox">${icon(32, 32, svg`<circle cx="16" cy="16" r="13.500" fill="#bcd6cf" stroke="#86a59e" stroke-width="2"/><circle cx="16" cy="16" r="11.500" stroke="#d9ece7" stroke-width="1.500"/>`)}</div>${t("Helpers", 90)}${caret()}</div></div></div>
        </div>

        <div class="work">
          <div class="side">
            <div class="sh">${t("Project Browser", 307)}
              ${icon(21, 12, svg`<path d="M0 0H21L10.500 12Z" fill="#666"/>`, "i1")}
              ${icon(16, 20, svg`<path d="M3 12V1H13V12M0 12.500H16M8 13V20M10.500 2V12" stroke="#666" stroke-width="2.200"/>`, "i2")}
              ${icon(19, 18, svg`<path d="M1 1L18 17M18 1L1 17" stroke="#666" stroke-width="3"/>`, "i3")}
            </div>
            <div class="sb">
              ${icon(36, 24, svg`<path d="M0 2.500H36M0 12H36M0 21.500H36" stroke="#666" stroke-width="4.400"/>`)}
              ${t("Webinar Outline", 192)}
              ${caret("#666")}
              ${icon(30, 32, svg`<path d="M15 0L30 15H22V31H8V15H0Z" fill="#1f9a55"/><path d="M15 2L3 14H10V30H13V10Z" fill="#7fd6a3"/><path d="M18 12H22V31H18Z" fill="#106236"/>`, "up")}
              ${icon(30, 32, svg`<path d="M15 32L30 17H22V1H8V17H0Z" fill="#1f9a55"/><path d="M15 30L3 18H10V2H13V20Z" fill="#7fd6a3"/><path d="M18 20V1H22V17H29L18 28Z" fill="#106236"/>`)}
            </div>
            ${tree.map(([lv, tg, ic, label, w, sel]) => html`<div class="node l${lv}">${tg}<span class="pic">${ic}</span><span class="txt ${sel ? "sel2" : ""}">${t(label, w)}</span></div>`)}
          </div>
          <div class="gutter"></div>
          <div class="main">
            <div class="cap">
              ${icon(21, 22, svg`<path d="M1 1L9 11L1 21M10 1L18 11L10 21" stroke="#000" stroke-width="3.400"/>`)}
              <span class="uc">${useCaseIcon(34, 31)}</span>
              ${icon(26, 36, svg`<path d="M6 17V8Q7 2 13 2Q20 2 20 9V17" stroke="#3b3b52" stroke-width="4.500"/><path d="M6 14V8Q7 2 13 2Q19 2 20 8" stroke="#c7c7cf" stroke-width="1.300"/><path d="M1 16H25V35H1Z" fill="#d6cf1d" stroke="#6b640c" stroke-width="1.500"/><path d="M4 17H9V34H4Z" fill="#f1ec72"/><path d="M5 23H22M5 29H22" stroke="#8b8413" stroke-width="1.500" stroke-dasharray="2 2"/>`)}
              ${t('Use Case Diagram: "Primary Use Cases"', 459)}
              ${icon(17, 9, svg`<path d="M0 0H17L8.500 9Z" fill="#000"/>`)}
              ${icon(17, 15, svg`<path d="M2 1L15 14M15 1L2 14" stroke="#000" stroke-width="4"/>`, "x")}
            </div>
            <div class="dtabs">
              ${logo(36, 37)}${t("Start Page", 122, "t1")}
              ${icon(31, 31, svg`<path d="M3 1H12V9H3ZM18 1H27V9H18Z" fill="#dbeafb" stroke="#5f86ad" stroke-width="2"/><path d="M7 9V15M23 9V15" stroke="#5f86ad" stroke-width="2"/><path d="M1 15H23L30 22L23 30H1L7 22Z" fill="#bfe0f5" stroke="#5f86ad" stroke-width="2"/>`)}
              ${t("Webinar Outline", 192, "t2")}
              <div class="active">${useCaseIcon(35, 31)}${t("Primary Use Cases", 233)}${icon(18, 15, svg`<path d="M1 0L17 15M17 0L1 15" stroke="#4a4a4e" stroke-width="2.600"/>`)}</div>
              <div class="nav">
                ${icon(13, 20, svg`<path d="M12 1V19L1 10Z" stroke="#777" stroke-width="2.200"/>`)}
                ${icon(13, 20, svg`<path d="M1 1V19L12 10Z" stroke="#777" stroke-width="2.200"/>`)}
              </div>
            </div>
            <div class="stage">
              ${diagram}
              <div class="scroll">
                <div><div class="sbtn">${icon(21, 12, svg`<path d="M0 12H21L10.500 0Z" fill="#666"/>`)}</div><div class="thumb"></div></div>
                <div class="sbot"></div>
              </div>
            </div>
          </div>
        </div>
      </div>
      <div class="shade"></div>
      <div class="vtitle">${t("Modeling Basics – Creating Your First Model", 1063)}</div>
      <svg class="vicons" width="180" height="70" viewBox="2696 66 180 70" fill="none">
        <circle cx="2726" cy="96" r="30" fill="#dedede"/>
        <path d="M2720 78H2726V95L2741 104.500L2738.500 109.500L2720 98.500Z" fill="#000"/>
        <path d="M2840 71L2864 95L2840 118V104Q2818 102 2804 121Q2808 88 2840 84.500Z" fill="#e0e0e0"/>
      </svg>
      <div class="subs">
        <div class="line">${t("By the end of the session I want you to feel comfortable", 1770)}</div>
        <div class="line two">${t("creating a simple model like this one.", 1180)}</div>
      </div>
      <div class="bar"><div class="played"></div><div class="loaded"></div></div>
    </div></div>`;
  }
}

customElements.define("app-root", AppRoot);
